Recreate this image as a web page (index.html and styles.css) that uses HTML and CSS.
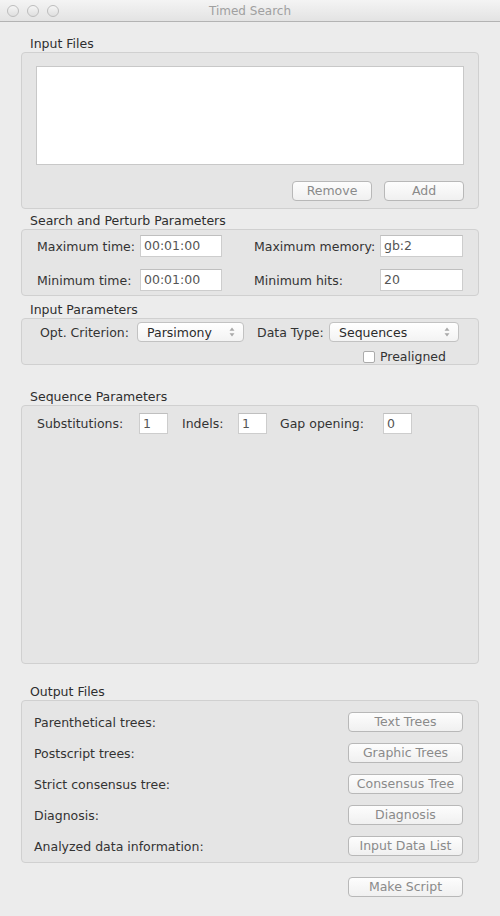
FILE: index.html
```html
<!DOCTYPE html>
<html>
<head>
<meta charset="utf-8">
<title>Timed Search</title>
<link rel="stylesheet" href="styles.css">
</head>
<body>
<div class="titlebar">
  <div class="lights"><span class="light"></span><span class="light"></span><span class="light"></span></div>
  <div class="title">Timed Search</div>
  <div></div>
</div>
<div class="content">
  <div class="group-label first">Input Files</div>
  <div class="box box-files">
    <div class="filelist"></div>
    <div class="btn-row">
      <button class="btn btn-small">Remove</button>
      <button class="btn btn-small">Add</button>
    </div>
  </div>

  <div class="group-label l2">Search and Perturb Parameters</div>
  <div class="box box-search">
    <span class="lbl">Maximum time:</span>
    <span class="field">00:01:00</span>
    <span></span>
    <span class="lbl">Maximum memory:</span>
    <span class="field">gb:2</span>
    <span class="lbl">Minimum time:</span>
    <span class="field">00:01:00</span>
    <span></span>
    <span class="lbl">Minimum hits:</span>
    <span class="field">20</span>
  </div>

  <div class="group-label l3">Input Parameters</div>
  <div class="box box-input">
    <div class="ip-row">
      <span class="lbl w-opt">Opt. Criterion:</span>
      <span class="popup w-pars"><span>Parsimony</span>
        <svg width="6" height="10" viewBox="0 0 6 10"><path d="M3 0.5 L5.5 3.8 L0.5 3.8 Z M3 9.5 L5.5 6.2 L0.5 6.2 Z" fill="#a9a9a9"/></svg>
      </span>
      <span class="lbl w-dt">Data Type:</span>
      <span class="popup w-seq"><span>Sequences</span>
        <svg width="6" height="10" viewBox="0 0 6 10"><path d="M3 0.5 L5.5 3.8 L0.5 3.8 Z M3 9.5 L5.5 6.2 L0.5 6.2 Z" fill="#a9a9a9"/></svg>
      </span>
    </div>
    <div class="check-row">
      <span class="checkbox"></span>
      <span class="check-lbl">Prealigned</span>
    </div>
  </div>

  <div class="group-label l4">Sequence Parameters</div>
  <div class="box box-seq">
    <div class="seq-row">
      <span class="lbl w-sub">Substitutions:</span>
      <span class="field small">1</span>
      <span class="lbl w-ind">Indels:</span>
      <span class="field small">1</span>
      <span class="lbl w-gap">Gap opening:</span>
      <span class="field small">0</span>
    </div>
  </div>

  <div class="group-label l5">Output Files</div>
  <div class="box box-out">
    <div class="out-row"><span class="lbl">Parenthetical trees:</span><button class="btn btn-wide">Text Trees</button></div>
    <div class="out-row"><span class="lbl">Postscript trees:</span><button class="btn btn-wide">Graphic Trees</button></div>
    <div class="out-row"><span class="lbl">Strict consensus tree:</span><button class="btn btn-wide">Consensus Tree</button></div>
    <div class="out-row"><span class="lbl">Diagnosis:</span><button class="btn btn-wide">Diagnosis</button></div>
    <div class="out-row"><span class="lbl">Analyzed data information:</span><button class="btn btn-wide">Input Data List</button></div>
  </div>

  <div class="script-row">
    <button class="btn btn-wide">Make Script</button>
  </div>
</div>
</body>
</html>
```
FILE: styles.css
```css
* { box-sizing: border-box; }
html, body { margin: 0; padding: 0; }
body {
  width: 500px;
  height: 916px;
  overflow: hidden;
  background: #ececec;
  font-family: "DejaVu Sans", "Liberation Sans", sans-serif;
  font-size: 12.5px;
  color: #333333;
}

.titlebar {
  height: 22px;
  border-bottom: 1px solid #b3b3b3;
  background: linear-gradient(#f4f4f4, #e3e3e3);
  display: grid;
  grid-template-columns: 1fr auto 1fr;
  align-items: center;
}
.lights { display: flex; gap: 8px; padding-left: 7px; }
.light {
  width: 12px; height: 12px; border-radius: 50%;
  border: 1px solid #bdbdbd;
  background: linear-gradient(#f5f5f5, #dfdfdf);
}
.title { color: #a0a0a0; font-size: 12px; }

.content { padding: 14px 21px 0 21px; }

.group-label { padding-left: 9px; height: 16px; line-height: 16px; color: #2e2e2e; }
.l2 { margin-top: 4px; }
.l3 { margin-top: 6px; }
.l4 { margin-top: 24px; }
.l5 { margin-top: 20px; }

.box {
  border: 1px solid #d0d0d0;
  border-radius: 4px;
  background: #e5e5e5;
}

.box-files { padding: 13px 14px 7px 14px; }
.filelist { height: 99px; background: #fff; border: 1px solid #c8c8c8; }
.btn-row { display: flex; justify-content: flex-end; gap: 12px; margin-top: 16px; }

.btn {
  height: 20px;
  padding: 0;
  border: 1px solid #b8b8b8;
  border-radius: 4px;
  background: linear-gradient(#fdfdfd, #f0f0f0);
  color: #8a8a8a;
  font-family: inherit;
  font-size: 12.5px;
  line-height: 18px;
  text-align: center;
}
.btn-small { width: 80px; }
.btn-wide { width: 115px; }

.box-search {
  display: grid;
  grid-template-columns: 103px 82px 32px 126px 83px;
  grid-auto-rows: 22px;
  row-gap: 12px;
  align-items: center;
  padding: 5px 15px 4px 15px;
}
.field {
  display: block;
  height: 22px;
  background: #fff;
  border: 1px solid #cdcdcd;
  border-top-color: #bfbfbf;
  padding-left: 3px;
  line-height: 20px;
  color: #555555;
}
.field.small { width: 29px; height: 21px; line-height: 19px; }

.box-input { padding: 3px 0 0 18px; }
.ip-row { display: flex; align-items: center; height: 20px; }
.w-opt { width: 97px; }
.w-dt { width: 72px; margin-left: 13px; }
.popup {
  height: 20px;
  display: flex;
  align-items: center;
  justify-content: space-between;
  padding: 0 8px 0 9px;
  border: 1px solid #c2c2c2;
  border-radius: 4px;
  background: linear-gradient(#ffffff, #f3f3f3);
  color: #2b2b2b;
}
.w-pars { width: 107px; }
.w-seq { width: 130px; }
.check-row {
  display: flex;
  align-items: flex-end;
  height: 15px;
  line-height: 15px;
  margin-top: 7px;
  padding-left: 323px;
}
.checkbox {
  width: 12px; height: 12px;
  border: 1px solid #ababab;
  border-radius: 2px;
  background: #fff;
  margin-bottom: 1px;
}
.check-lbl { margin-left: 5px; }

.box-seq { height: 259px; padding: 7px 15px; }
.seq-row { display: flex; align-items: center; height: 21px; }
.w-sub { width: 102px; }
.w-ind { width: 56px; margin-left: 14px; }
.w-gap { width: 103px; margin-left: 13px; }

.box-out {
  display: flex;
  flex-direction: column;
  gap: 11px;
  padding: 11px 15px 6px 12px;
}
.out-row { display: flex; justify-content: space-between; align-items: center; height: 20px; }

.script-row { display: flex; justify-content: flex-end; margin-top: 14px; padding-right: 16px; }
```
